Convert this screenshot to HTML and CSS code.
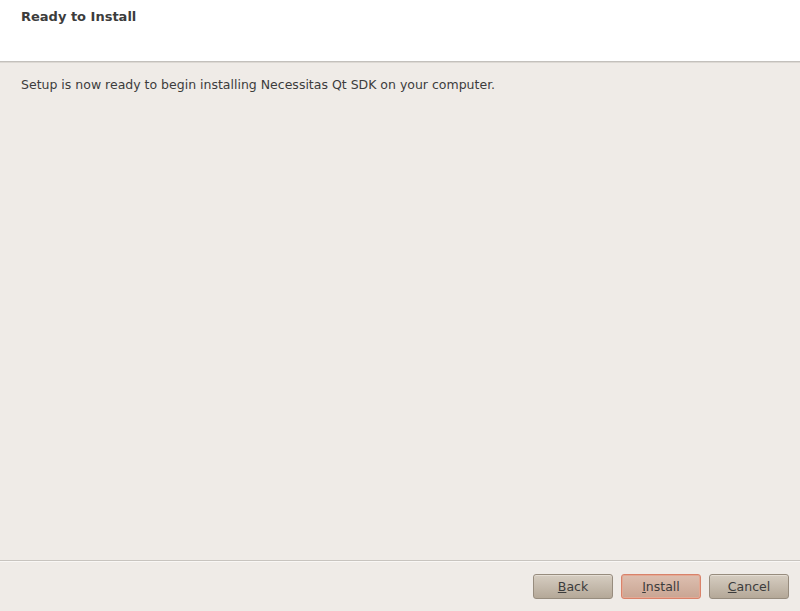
FILE: index.html
```html
<!DOCTYPE html>
<html>
<head>
<meta charset="utf-8">
<link rel="stylesheet" href="styles.css">
</head>
<body>
<div class="wizard">
  <div class="header">
    <div class="title">Ready to Install</div>
  </div>
  <div class="content">
    <p class="message">Setup is now ready to begin installing Necessitas Qt SDK on your computer.</p>
  </div>
  <div class="footer">
    <button class="btn"><u>B</u>ack</button>
    <button class="btn default"><u>I</u>nstall</button>
    <button class="btn"><u>C</u>ancel</button>
  </div>
</div>
</body>
</html>
```
FILE: styles.css
```css
html, body {
  margin: 0;
  padding: 0;
  width: 800px;
  height: 611px;
  overflow: hidden;
  background: #efebe7;
  font-family: "DejaVu Sans", sans-serif;
  font-size: 12.5px;
  color: #3c3c3c;
}
.wizard {
  display: flex;
  flex-direction: column;
  height: 611px;
}
.header {
  background: #ffffff;
  border-bottom: 1px solid #c3c0bc;
  box-shadow: 0 1px 0 #dcd8d3;
  box-sizing: border-box;
  height: 62px;
  padding: 9px 21px 0;
}
.title {
  font-weight: bold;
  font-size: 13px;
  color: #3c3c3c;
}
.content {
  flex: 1;
  padding: 15px 21px;
}
.message {
  margin: 0;
}
.footer {
  border-top: 1px solid #c8c4bf;
  box-shadow: inset 0 1px 0 #f9f7f5;
  height: 51px;
  box-sizing: border-box;
  display: flex;
  justify-content: flex-end;
  align-items: flex-start;
  gap: 8px;
  padding: 13px 11px 0 0;
}
.btn {
  width: 80px;
  height: 25px;
  font-family: "DejaVu Sans", sans-serif;
  font-size: 12.5px;
  color: #3c3c3c;
  border: 1px solid #978c7e;
  border-radius: 3px;
  background: linear-gradient(#d6cdc1, #b4a898);
  padding: 0;
  box-shadow: inset 0 1px 0 #e5ded4;
}
.btn u {
  text-decoration-thickness: 1px;
}
.btn.default {
  border-color: #d9826a;
  box-shadow: inset 0 0 0 1px #e3a994;
  background: linear-gradient(#ddbfb0, #c9a593);
}
```
